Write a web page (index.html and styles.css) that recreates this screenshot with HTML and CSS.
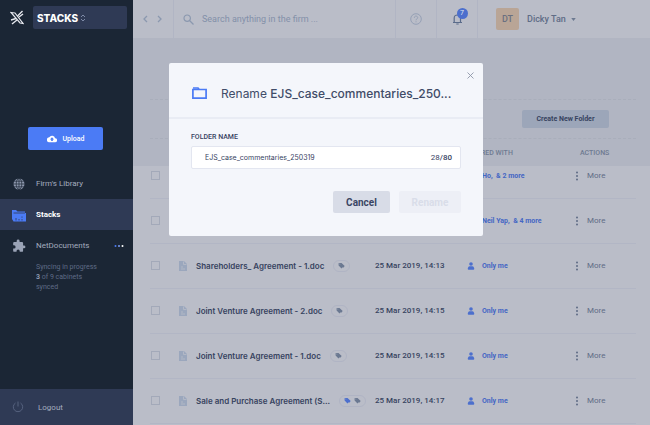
FILE: index.html
```html
<!DOCTYPE html>
<html lang="en">
<head>
<meta charset="utf-8">
<meta name="viewport" content="width=device-width, initial-scale=1">
<title>Stacks</title>
<link rel="stylesheet" href="styles.css">
</head>
<body>
<svg class="sprite" aria-hidden="true">
  <symbol id="i-tag" viewBox="0 0 24 24"><path d="M2 4v8l10 10 4-4 2 2 5-6L12 3H3z"/><circle cx="6.500" cy="7" r="1.500" fill="#b9bcc8"/></symbol>
  <symbol id="i-doc" viewBox="0 0 8 10"><path d="M0 0h5l3 3v7H0z"/><path d="M4.500.5v3h3M2 6h2M2 8h4" stroke="#b9bcc8" fill="none" stroke-width=".8"/></symbol>
  <symbol id="i-user" viewBox="0 0 8 8"><circle cx="4" cy="2" r="1.800"/><path d="M1.500 7.700C0 7.700 1 4.500 2.500 4.300h3C7 4.500 8 7.700 6.500 7.700z"/></symbol>
  <symbol id="i-dots" viewBox="0 0 4 10"><circle cx="2" cy="1.500" r="1"/><circle cx="2" cy="5" r="1"/><circle cx="2" cy="8.500" r="1"/></symbol>
</svg>
<div class="app">
  <aside class="sidebar">
    <div class="brand">
      <svg class="logo" viewBox="0 0 14 15" fill="none" stroke="#e6e8ee"><path d="M1 2.500l4 .5 8 10.500-3-.5z" stroke-width="1.200"/><path d="M12.500 1L7.500 6M13 4L9 7M6 8.500L1 10M7 10l-5 4" stroke-width="1.400"/></svg>
      <div class="switcher">
        <select class="switcher-select" aria-label="Workspace"><option>STACKS</option></select>
        <svg class="switcher-icon" viewBox="0 0 6 8" fill="none" stroke="#7d89a6"><path d="M1 3l2-2 2 2M1 5l2 2 2-2"/></svg>
      </div>
    </div>
    <button class="upload" type="button">
      <svg viewBox="0 0 24 24" width="10" height="10" fill="#fff"><path d="M19.400 10A7.500 7.500 0 0 0 5.400 8 6 6 0 0 0 6 20h13a5 5 0 0 0 .4-10zM14 13v4h-4v-4H7l5-5 5 5z"/></svg>
      Upload
    </button>
    <nav class="nav">
      <a class="nav-item" href="#library">
        <svg class="nav-icon" viewBox="0 0 14 14" fill="none"><circle cx="7" cy="7" r="5.500" fill="#8e98ae"/><path d="M1 7h12M2 4.200h10M2 9.800h10M7 1v12" stroke="#1b2635" stroke-width=".7"/><ellipse cx="7" cy="7" rx="2.800" ry="5.500" stroke="#1b2635" stroke-width=".7"/></svg>
        Firm's Library
      </a>
      <a class="nav-item nav-item-active" href="#stacks">
        <svg class="nav-icon" viewBox="0 0 14 14"><path fill="#4b7bf5" d="M0 2h4l1.500 1.500H13V5h1v8.500H1.500L0 11z"/><path stroke="#2f3a55" stroke-width=".8" d="M1.500 5H13M4 10v2.500M7 11v1.500M10 8.500v1.200M10 11v1.500" fill="none"/></svg>
        Stacks
      </a>
      <a class="nav-item" href="#netdocuments">
        <svg class="nav-icon" viewBox="0 0 24 24" fill="#9aa3b6"><path d="M20.500 11H19V7a2 2 0 0 0-2-2h-4V3.500a2.500 2.500 0 0 0-5 0V5H4a2 2 0 0 0-2 2v3.800h1.500a2.700 2.700 0 0 1 0 5.400H2V20a2 2 0 0 0 2 2h3.800v-1.500a2.700 2.700 0 0 1 5.400 0V22H17a2 2 0 0 0 2-2v-4h1.500a2.500 2.500 0 0 0 0-5z"/></svg>
        NetDocuments
        <svg class="nav-more" viewBox="0 0 10 4"><circle cx="1.500" cy="2" r="1" fill="#4b7bf5"/><circle cx="5" cy="2" r="1" fill="#7c9df5"/><circle cx="8.500" cy="2" r="1" fill="#fff"/></svg>
      </a>
      <p class="sync">Syncing in progress<br><b>3</b> of 9 cabinets<br>synced</p>
    </nav>
    <a class="logout" href="#logout">
      <svg viewBox="0 0 12 12" width="12" height="12" fill="none" stroke="#56627f"><path d="M6 .5v5M3.500 2a4.700 4.700 0 1 0 5 0"/></svg>
      Logout
    </a>
  </aside>

  <main class="main">
    <header class="topbar">
      <div class="history">
        <button class="plain" type="button" aria-label="Back"><svg viewBox="0 0 5 8" width="5" height="8" fill="none" stroke="#8b98af" stroke-width="1.300"><path d="M4 1L1 4l3 3"/></svg></button>
        <button class="plain" type="button" aria-label="Forward"><svg viewBox="0 0 5 8" width="5" height="8" fill="none" stroke="#8b98af" stroke-width="1.300"><path d="M1 1l3 3-3 3"/></svg></button>
      </div>
      <div class="search">
        <svg viewBox="0 0 11 11" width="11" height="11" fill="none" stroke="#8b98af" stroke-width="1.200"><circle cx="4.200" cy="4.200" r="3.200"/><path d="M6.500 6.500l4 4"/></svg>
        <input class="search-input" type="search" aria-label="Search" placeholder="Search anything in the firm ...">
      </div>
      <button class="plain cell" type="button" aria-label="Help"><svg viewBox="0 0 12 12" width="12" height="12" fill="none" stroke="#95a0b5"><circle cx="6" cy="6" r="5.300"/><path d="M4.300 4.800C4.300 2.500 7.700 2.500 7.700 4.700 7.700 6 6 5.800 6 7.300M6 8.300v1"/></svg></button>
      <button class="plain cell" type="button" aria-label="Notifications">
        <span class="bell"><svg viewBox="0 0 11 12" width="11" height="12" fill="none" stroke="#5a6b8a" stroke-width="1.200"><path d="M1 9.500h9M2.200 9.500V5c0-4 6.300-4 6.300 0v4.500M4.300 11h2.400"/></svg><span class="badge">7</span></span>
      </button>
      <button class="plain account" type="button">
        <span class="avatar">DT</span>
        <span class="account-name">Dicky Tan <svg viewBox="0 0 6 4" width="5" height="3" fill="#6c7990"><path d="M0 0h6L3 4z"/></svg></span>
      </button>
    </header>

    <section class="toolbar">
      <div class="toolbar-row"><button class="create" type="button">Create New Folder</button></div>
    </section>

    <div class="files">
      <table class="table">
        <colgroup><col class="c-check"><col class="c-icon"><col><col class="c-date"><col class="c-shared"><col class="c-actions"></colgroup>
        <thead><tr><th></th><th></th><th></th><th></th><th>SHARED WITH</th><th class="th-actions">ACTIONS</th></tr></thead>
        <tbody>
          <tr class="row-cut"><td><input class="check" type="checkbox" aria-label="Select row 1"></td><td><svg class="doc"><use href="#i-doc"/></svg></td><td></td><td></td><td><a class="shared" href="#s1"><svg><use href="#i-user"/></svg>Ho,&nbsp; &amp; 2 more</a></td><td><button class="plain more" type="button"><svg><use href="#i-dots"/></svg>More</button></td></tr>
          <tr><td><input class="check" type="checkbox" aria-label="Select row 2"></td><td><svg class="doc"><use href="#i-doc"/></svg></td><td></td><td></td><td><a class="shared" href="#s2"><svg><use href="#i-user"/></svg>Neil Yap,&nbsp; &amp; 4 more</a></td><td><button class="plain more" type="button"><svg><use href="#i-dots"/></svg>More</button></td></tr>
          <tr><td><input class="check" type="checkbox" aria-label="Select Shareholders_ Agreement - 1.doc"></td><td><svg class="doc"><use href="#i-doc"/></svg></td><td><div class="name"><span>Shareholders_ Agreement - 1.doc</span><span class="tags"><svg><use href="#i-tag"/></svg></span></div></td><td class="date">25 Mar 2019, 14:13</td><td><a class="shared" href="#s3"><svg><use href="#i-user"/></svg>Only me</a></td><td><button class="plain more" type="button"><svg><use href="#i-dots"/></svg>More</button></td></tr>
          <tr><td><input class="check" type="checkbox" aria-label="Select Joint Venture Agreement - 2.doc"></td><td><svg class="doc"><use href="#i-doc"/></svg></td><td><div class="name"><span>Joint Venture Agreement - 2.doc</span><span class="tags"><svg><use href="#i-tag"/></svg></span></div></td><td class="date">25 Mar 2019, 14:15</td><td><a class="shared" href="#s4"><svg><use href="#i-user"/></svg>Only me</a></td><td><button class="plain more" type="button"><svg><use href="#i-dots"/></svg>More</button></td></tr>
          <tr><td><input class="check" type="checkbox" aria-label="Select Joint Venture Agreement - 1.doc"></td><td><svg class="doc"><use href="#i-doc"/></svg></td><td><div class="name"><span>Joint Venture Agreement - 1.doc</span><span class="tags"><svg><use href="#i-tag"/></svg></span></div></td><td class="date">25 Mar 2019, 14:15</td><td><a class="shared" href="#s5"><svg><use href="#i-user"/></svg>Only me</a></td><td><button class="plain more" type="button"><svg><use href="#i-dots"/></svg>More</button></td></tr>
          <tr><td><input class="check" type="checkbox" aria-label="Select Sale and Purchase Agreement"></td><td><svg class="doc"><use href="#i-doc"/></svg></td><td><div class="name"><span>Sale and Purchase Agreement (S...</span><span class="tags"><svg class="tag-blue"><use href="#i-tag"/></svg><svg><use href="#i-tag"/></svg></span></div></td><td class="date">25 Mar 2019, 14:17</td><td><a class="shared" href="#s6"><svg><use href="#i-user"/></svg>Only me</a></td><td><button class="plain more" type="button"><svg><use href="#i-dots"/></svg>More</button></td></tr>
        </tbody>
      </table>
    </div>
  </main>
</div>

<div class="overlay">
  <form class="modal" role="dialog" aria-labelledby="modal-title">
    <button class="plain close" type="button" aria-label="Close"><svg viewBox="0 0 7 7" width="7" height="7" stroke="#8d96a8" stroke-width=".9"><path d="M.5.5l6 6M6.500.5l-6 6"/></svg></button>
    <div class="modal-head">
      <svg viewBox="0 0 15 12" width="15" height="12" fill="none" stroke="#4b7bf5" stroke-width="1.700"><path d="M.9 2.500h13.200v8.600H.9z"/><path d="M1 1h5l1 1.300"/></svg>
      <h1 class="modal-title" id="modal-title">Rename <b>EJS_case_commentaries_250...</b></h1>
    </div>
    <div class="modal-body">
      <label class="label" for="folder">FOLDER NAME</label>
      <div class="field"><input class="field-input" id="folder" type="text" value="EJS_case_commentaries_250319"><span class="count">28<b>/80</b></span></div>
      <div class="buttons">
        <button class="btn btn-cancel" type="button">Cancel</button>
        <button class="btn btn-rename" type="submit" disabled>Rename</button>
      </div>
    </div>
  </form>
</div>
</body>
</html>
```

FILE: styles.css
```css
* { box-sizing: border-box; }
body {
  margin: 0;
  font-family: Roboto, "Liberation Sans", sans-serif;
  font-size: 8px;
  color: #37435f;
  background: #babdc8;
}
svg { display: block; flex: none; }
button, input, select { font: inherit; color: inherit; }
a { color: inherit; text-decoration: none; }
.sprite { position: absolute; width: 0; height: 0; }
.plain { border: 0; padding: 0; background: none; }

.app { display: flex; height: 100vh; overflow: hidden; }

/* Sidebar */
.sidebar { flex: none; width: 133px; display: flex; flex-direction: column; background: #1b2635; color: #a3acbf; }
.brand { display: flex; align-items: center; gap: 9px; padding: 6px 6px 0 10px; }
.logo { width: 14px; height: 15px; }
.switcher { flex: 1; display: flex; align-items: center; gap: 1px; height: 23px; padding-left: 4px; border-radius: 2px; background: #2f3a55; }
.switcher-select { appearance: none; border: 0; padding: 0; background: none; color: #fff; font: 800 10px Inter, sans-serif; }
.switcher-icon { width: 6px; height: 8px; }
.upload { display: flex; align-items: center; justify-content: center; gap: 6px; height: 23px; margin: 98px 30px 18px 28px; border: 0; border-radius: 2px; background: #4b7bf5; color: #fff; font-size: 7px; font-weight: 500; }
.nav { flex: 1; }
.nav-item { display: flex; align-items: center; gap: 10px; height: 31px; padding: 0 9px 0 12px; }
.nav-icon { width: 14px; height: 14px; }
.nav-item-active { background: #2f3a55; color: #fff; font-weight: 700; }
.nav-more { width: 10px; height: 4px; margin-left: auto; }
.sync { margin: 1px 0 0 36px; font-size: 7px; line-height: 10px; color: #5f6b86; }
.sync b { color: #8d98b0; }
.logout { display: flex; align-items: center; gap: 14px; height: 36px; padding-left: 12px; background: #2f3a55; }

/* Top bar */
.main { flex: 1; min-width: 0; }
.topbar { display: flex; height: 38px; background: #babdc8; color: #5f6c86; }
.history { display: flex; align-items: center; gap: 9px; width: 41px; padding-left: 10px; border-right: 1px solid #b1b5c4; }
.search { flex: 1; display: flex; align-items: center; gap: 8px; padding-left: 9px; }
.search-input { flex: 1; min-width: 0; border: 0; padding: 0; background: none; font-size: 9px; }
.search-input::placeholder { color: #8390a8; }
.cell { width: 41px; display: flex; align-items: center; justify-content: center; border-left: 1px solid #b1b5c4; }
.bell { position: relative; }
.badge { position: absolute; top: -5px; right: -5px; width: 11px; height: 11px; border-radius: 50%; background: #4c6fcd; color: #dfe3f0; font-size: 7px; line-height: 11px; }
.account { display: flex; align-items: center; gap: 8px; width: 173px; padding-left: 18px; border-left: 1px solid #b1b5c4; font-size: 9px; font-weight: 500; }
.account-name { display: flex; align-items: center; gap: 5px; }
.avatar { width: 23px; height: 22px; border-radius: 2px; background: #b9a596; color: #6b7080; line-height: 22px; }

/* Toolbar */
.toolbar { padding: 61px 14px 0 17px; background: #b1b5c2; }
.toolbar-row { display: flex; justify-content: flex-end; align-items: center; height: 40px; padding-right: 27px; border-top: 1px dashed #a9aebb; border-bottom: 1px dashed #a9aebb; }
.create { width: 87px; height: 18px; border: 0; border-radius: 2px; padding: 0; background: #9ca6b9; font-size: 7px; font-weight: 700; }

/* File list */
.files { padding: 0 14px 0 17px; background: linear-gradient(#b1b5c2 27px, #babdc8 27px); }
.table { width: 100%; table-layout: fixed; border-collapse: collapse; }
.c-check { width: 29px; }
.c-icon { width: 17px; }
.c-date { width: 92px; }
.c-shared { width: 105px; }
.c-actions { width: 64px; }
th { height: 27px; padding: 0; text-align: left; font-size: 7px; font-weight: 500; color: #6e7a91; }
.th-actions { padding-left: 8px; }
td { height: 45px; padding: 0; border-bottom: 1px solid #b2b6c5; white-space: nowrap; }
.row-cut td { height: 32px; padding-bottom: 12px; }
.check { display: block; appearance: none; width: 9px; height: 9px; margin: 0 0 0 1px; border: 1px solid #a3a9b9; }
.doc { width: 8px; height: 10px; fill: #9ba7bd; }
.name { display: flex; align-items: center; gap: 9px; font-size: 8px; font-weight: 600; font-family: Inter, sans-serif; }
.tags { display: flex; align-items: center; gap: 3px; height: 12px; padding: 0 4px; border: 1px solid #b0b4c4; border-radius: 6px; }
.tags svg { width: 7px; height: 7px; fill: #6a7891; }
.tags .tag-blue { fill: #4c6fcd; }
.date { font-weight: 500; }
.shared { display: flex; align-items: center; gap: 7px; color: #4466c4; font-size: 7px; font-weight: 700; }
.shared svg { width: 8px; height: 8px; fill: #4c6fcd; }
.more { display: flex; align-items: center; gap: 8px; margin-left: 3px; color: #5f6c86; }
.more svg { width: 4px; height: 10px; fill: #5f6c86; }

/* Rename dialog */
.overlay { position: fixed; inset: 0; padding: 63px 0 0 2px; }
.modal { position: relative; max-width: 314px; margin: 0 auto; border-radius: 2px; background: #f4f6fb; }
.close { position: absolute; top: 9px; right: 9px; }
.modal-head { display: flex; align-items: center; gap: 14px; height: 56px; padding: 6px 23px 0; border-bottom: 2px solid #e9ecf4; }
.modal-title { margin: 0; font: 400 12px Inter, sans-serif; white-space: nowrap; color: #414c68; }
.modal-title b { font-weight: 500; }
.modal-body { padding: 12px 22px 23px; }
.label { display: block; line-height: 12px; font-size: 7px; font-weight: 500; }
.field { display: flex; align-items: center; height: 23px; margin: 3px 0 22px; padding: 0 8px 0 13px; border: 1px solid #e3e6f0; border-radius: 2px; background: #fff; }
.field-input { flex: 1; min-width: 0; border: 0; padding: 0; background: none; font-size: 7px; font-family: Inter, sans-serif; }
.count b { font-weight: 500; }
.buttons { display: flex; justify-content: flex-end; gap: 9px; }
.btn { height: 22px; border: 0; border-radius: 2px; padding: 0; font-size: 10px; font-weight: 700; }
.btn-cancel { width: 57px; background: #d8dce7; color: #3b4664; }
.btn-rename { width: 62px; background: #edeff6; color: #d9dde9; }
```
